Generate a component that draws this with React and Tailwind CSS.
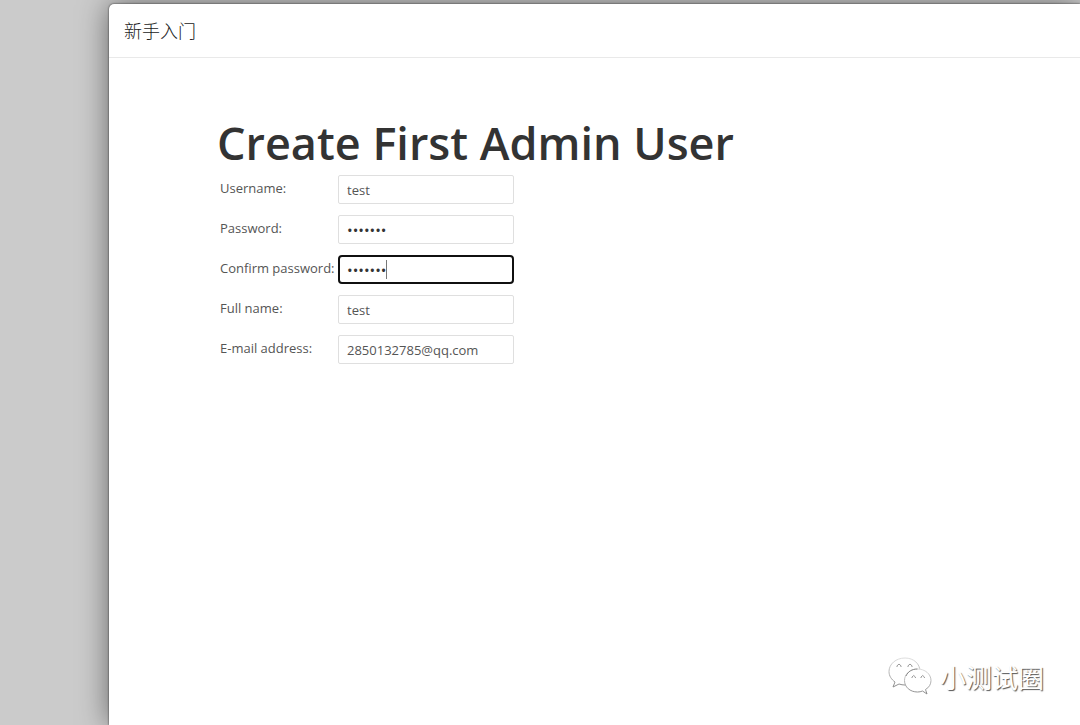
import React, { useState } from "react";

const FIELDS = [
  { id: "username", label: "Username:", type: "text", value: "test" },
  { id: "password1", label: "Password:", type: "password", value: "testing" },
  { id: "password2", label: "Confirm password:", type: "password", value: "testing", active: true },
  { id: "fullname", label: "Full name:", type: "text", value: "test" },
  { id: "email", label: "E-mail address:", type: "text", value: "2850132785@qq.com" },
];

function FormRow({ field, value, onChange }) {
  return (
    <div className="flex h-10 items-start">
      <label htmlFor={field.id} className="w-[118px] shrink-0 pt-[3px] text-[13px] leading-5 whitespace-nowrap">
        {field.label}
      </label>
      <div className="relative">
        <input
          id={field.id}
          name={field.id}
          type={field.type}
          value={value}
          onChange={(e) => onChange(field.id, e.target.value)}
          className={`block h-[29px] w-44 bg-white outline-none ${
            field.active
              ? "rounded-[4px] border-2 border-[#101010] px-[7px] caret-transparent"
              : "rounded-[2px] border border-[#dfdfdf] px-2"
          } ${field.type === "password" ? "text-[15px] text-[#333]" : "text-[13px]"}`}
        />
        {field.active && <span className="absolute top-[5px] left-12 h-[19px] w-px bg-[#777]" />}
      </div>
    </div>
  );
}

function ChatLogo() {
  return (
    <svg width="44" height="40" viewBox="0 0 44 40" fill="white">
      <defs>
        <linearGradient id="bubble" x1="0" y1="0" x2="0" y2="1">
          <stop offset="0" stopColor="#dedede" />
          <stop offset="1" stopColor="#8a8a8a" />
        </linearGradient>
      </defs>
      <path
        d="M17 1C8 1 1 7 1 14.500C1 19 3.500 22.500 7 25L5 30L11 27C13 27.700 15 28 17 28C26 28 32 22 32 14.500C32 7 26 1 17 1Z"
        stroke="url(#bubble)"
      />
      <path d="M9 10v-1q2-3.500 4 0v1M20 10v-1q2-3.500 4 0v1" fill="none" stroke="#999" />
      <path
        d="M29.500 12C22 12 16.500 17 16.500 23.500C16.500 30 22 35 29.500 35C31.300 35 33 34.700 34.500 34L39 37L37.500 32.500C41 30.500 43 27.300 43 23.500C43 17 37 12 29.500 12Z"
        stroke="url(#bubble)"
      />
      <path d="M18 19C20 14.500 24 12 29.500 12" fill="none" stroke="#8a8a8a" />
      <path d="M24 21v-1q1.700-3 3.400 0v1M33 21v-1q1.700-3 3.400 0v1" fill="none" stroke="#999" />
    </svg>
  );
}

export default function App() {
  const [values, setValues] = useState(Object.fromEntries(FIELDS.map((f) => [f.id, f.value])));

  const handleChange = (id, value) => {
    setValues((prev) => ({ ...prev, [id]: value }));
  };

  return (
    <div className="flex min-h-screen overflow-hidden bg-[#cbcbcb] pt-1 pl-[109px] font-['Open_Sans','Noto_Sans_CJK_SC',sans-serif] text-[#555]">
      <main className="flex flex-1 flex-col rounded-tl-[5px] bg-white shadow-[0_0_30px_rgba(0,0,0,0.5),0_0_2px_rgba(0,0,0,0.8)]">
        <header className="border-b border-[#e9e9e9] px-[15px] py-[13px]">
          <h4 className="font-['Noto_Sans_CJK_SC',sans-serif] text-lg leading-[27px] font-light text-[#222]">新手入门</h4>
        </header>

        <form className="flex-1 pt-[58px] pl-[108px]" onSubmit={(e) => e.preventDefault()}>
          <h1 className="text-[45px] leading-[54px] font-semibold whitespace-nowrap text-[#333]">
            Create First Admin User
          </h1>
          <div className="pt-[5px] pl-[3px]">
            {FIELDS.map((field) => (
              <FormRow key={field.id} field={field} value={values[field.id]} onChange={handleChange} />
            ))}
          </div>
        </form>

        <footer className="flex items-center justify-end gap-2 pr-9 pb-7">
          <ChatLogo />
          <span className="font-['Noto_Sans_CJK_SC',sans-serif] text-[26px] leading-9 text-white [text-shadow:1px_1px_1px_#555]">
            小测试圈
          </span>
        </footer>
      </main>
    </div>
  );
}
